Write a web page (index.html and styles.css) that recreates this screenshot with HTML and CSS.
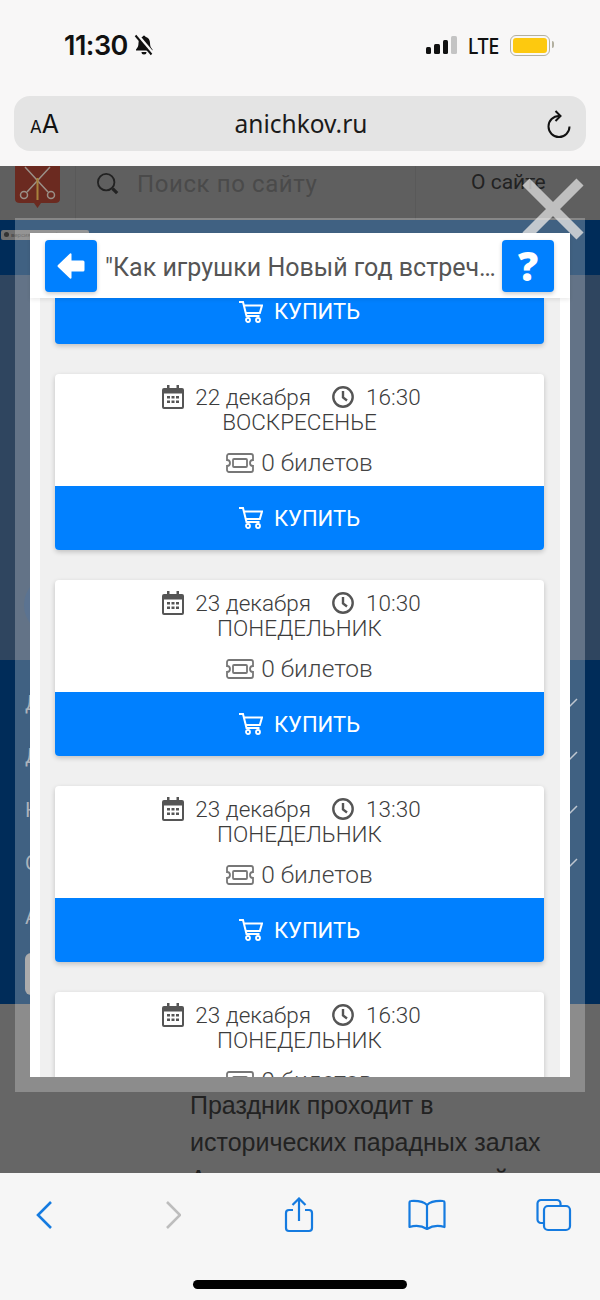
FILE: index.html
```html
<!DOCTYPE html>
<html lang="ru">
<head>
    <meta charset="UTF-8">
    <meta name="viewport" content="width=device-width, initial-scale=1.0">
    <title>anichkov.ru</title>
    <link rel="stylesheet" href="styles.css">
</head>
<body>
    <!-- Iconos repetidos -->
    <svg class="defs" width="0" height="0">
        <symbol id="i-cal" viewBox="0 0 22 24">
            <path fill="#555" d="M5 0h2.500v3h7V0H17v3h3a2 2 0 0 1 2 2v17a2 2 0 0 1-2 2H2a2 2 0 0 1-2-2V5a2 2 0 0 1 2-2h3zM2 8.500V21.500a.5.5 0 0 0 .5.5h17a.5.5 0 0 0 .5-.5V8.500z"/>
            <path fill="#555" d="M5 11h3v2.500H5zM9.500 11h3v2.500h-3zM14 11h3v2.500h-3zM5 15.500h3V18H5zM9.500 15.500h3V18h-3zM14 15.500h3V18h-3z"/>
        </symbol>
        <symbol id="i-clock" viewBox="0 0 22 22">
            <circle cx="11" cy="11" r="9.700" fill="none" stroke="#555" stroke-width="2.400"/>
            <path d="M11 5v6.500l4 3" fill="none" stroke="#555" stroke-width="2.400"/>
        </symbol>
        <symbol id="i-ticket" viewBox="0 0 28 20">
            <path fill="none" stroke="#777" stroke-width="1.800" d="M3 1h22a2 2 0 0 1 2 2v4a3 3 0 0 0 0 6v4a2 2 0 0 1-2 2H3a2 2 0 0 1-2-2v-4a3 3 0 0 0 0-6V3a2 2 0 0 1 2-2z"/>
            <rect x="7" y="6" width="14" height="8" rx="1" fill="none" stroke="#777" stroke-width="1.800"/>
        </symbol>
        <symbol id="i-cart" viewBox="0 0 24 22">
            <path fill="none" stroke="#fff" stroke-width="2" d="M0 1h4l3.500 14h13M5 4.500h18l-2.200 7.500H6.800"/>
            <circle cx="9" cy="19" r="2" fill="none" stroke="#fff" stroke-width="1.800"/>
            <circle cx="19" cy="19" r="2" fill="none" stroke="#fff" stroke-width="1.800"/>
        </symbol>
    </svg>

    <!-- Barra de estado y direccion -->
    <header class="browser-top">
        <div class="status-bar">
            <div class="status-left">
                <span class="time">11:30</span>
                <svg class="bell" width="20" height="22" viewBox="0 0 20 22">
                    <path fill="#111" d="M10 1.500a2 2 0 0 1 1.500 1.200c3 .8 4.500 3.300 4.500 6.300 0 3 .8 4.500 2.500 6.500v1H2v-1c1.700-2 2.500-3.500 2.500-6.500 0-3 1.500-5.500 4-6.300A2 2 0 0 1 10 1.500zM7.500 18h5a2.500 2.500 0 0 1-5 0z"/>
                    <path stroke="#f8f7f7" stroke-width="3" d="M3.500 1l16 19"/>
                    <path stroke="#111" stroke-width="2" d="M1.500 1.500l16 19"/>
                </svg>
            </div>
            <div class="status-right">
                <div class="signal">
                    <i class="bar bar-1"></i><i class="bar bar-2"></i><i class="bar bar-3"></i><i class="bar bar-4"></i>
                </div>
                <span class="lte">LTE</span>
                <div class="battery"><div class="battery-fill"></div></div>
            </div>
        </div>
        <div class="url-bar">
            <span class="text-size"><small>A</small>A</span>
            <span class="url">anichkov.ru</span>
            <svg class="reload" width="26" height="28" viewBox="0 0 26 28">
                <path fill="none" stroke="#111" stroke-width="2" d="M13 6a10.500 10.500 0 1 0 10.500 10.500"/>
                <path fill="none" stroke="#111" stroke-width="2" d="M9.500 1l5 5-5 5"/>
            </svg>
        </div>
    </header>

    <!-- Pagina de fondo, oscurecida -->
    <div class="site">
        <div class="site-head">
            <svg class="crest" width="45" height="43" viewBox="0 0 45 43">
                <path fill="#6b2a20" d="M0 0h45v33q0 4-5 4H26l-3.500 5-3.500-5H5q-5 0-5-4z"/>
                <path fill="none" stroke="#9a9088" stroke-width="1.500" d="M10 1l23 25M35 1L12 26"/>
                <path fill="none" stroke="#a8823c" stroke-width="2" d="M22.500 12v22"/>
                <circle cx="9" cy="29" r="3.500" fill="none" stroke="#9a9088" stroke-width="1.500"/>
                <circle cx="36" cy="29" r="3.500" fill="none" stroke="#9a9088" stroke-width="1.500"/>
            </svg>
            <div class="site-search">
                <svg width="22" height="22" viewBox="0 0 24 24">
                    <circle cx="10" cy="10" r="9" fill="none" stroke="#222" stroke-width="2"/>
                    <path stroke="#222" stroke-width="3.500" d="M17 17l5 5"/>
                </svg>
                <span class="search-text">Поиск по сайту</span>
            </div>
            <div class="site-about">О сайте</div>
        </div>
        <div class="site-band">
            <div class="vision-badge"><i class="vision-dot"></i>версия для слабовидящих</div>
        </div>
        <div class="site-hero">
            <div class="hero-pill"></div>
        </div>
        <nav class="site-nav">
            <div class="nav-row">Дворец<svg class="nav-check" width="16" height="10" viewBox="0 0 16 10"><path fill="none" stroke="#aab4c0" stroke-width="1.500" d="M1 1l7 7 7-7"/></svg></div>
            <div class="nav-row">Детям<svg class="nav-check" width="16" height="10" viewBox="0 0 16 10"><path fill="none" stroke="#aab4c0" stroke-width="1.500" d="M1 1l7 7 7-7"/></svg></div>
            <div class="nav-row">Кружки<svg class="nav-check" width="16" height="10" viewBox="0 0 16 10"><path fill="none" stroke="#aab4c0" stroke-width="1.500" d="M1 1l7 7 7-7"/></svg></div>
            <div class="nav-row">Обучение<svg class="nav-check" width="16" height="10" viewBox="0 0 16 10"><path fill="none" stroke="#aab4c0" stroke-width="1.500" d="M1 1l7 7 7-7"/></svg></div>
            <div class="nav-row">Афиша</div>
            <div class="nav-btn"></div>
        </nav>
        <div class="site-text">
            <p>Праздник проходит в<br>исторических парадных залах<br>Аничкова дворца и детской</p>
        </div>
    </div>

    <!-- Cruz de cierre, queda debajo del modal -->
    <svg class="modal-close" width="62" height="62" viewBox="0 0 62 62">
        <path stroke="#d4d4d4" stroke-opacity=".82" stroke-width="10" d="M4 4l54 54M58 4L4 58"/>
    </svg>

    <!-- Modal con las sesiones -->
    <div class="modal">
        <div class="modal-box">
            <div class="modal-head">
                <div class="icon-btn">
                    <svg width="28" height="26" viewBox="0 0 28 26"><path fill="#fff" d="M13 0.500q1-.5 1.500.5v6.500H26q1.500 0 1.500 1.500v8q0 1.500-1.500 1.500H14.500V25q-.5 1-1.500.5L1 14q-1-1 0-2z"/></svg>
                </div>
                <div class="modal-title">"Как игрушки Новый год встречали"</div>
                <div class="icon-btn help">?</div>
            </div>
            <div class="modal-list">
                <a class="buy-btn buy-cut">
                    <svg class="cart" width="24" height="22"><use href="#i-cart"/></svg>КУПИТЬ
                </a>

                <div class="card">
                    <div class="card-body">
                        <div class="card-date">
                            <svg width="22" height="24"><use href="#i-cal"/></svg><span class="date-text">22 декабря</span>
                            <svg width="22" height="22"><use href="#i-clock"/></svg><span class="hour-text">16:30</span>
                        </div>
                        <div class="card-day">ВОСКРЕСЕНЬЕ</div>
                        <div class="card-tickets"><svg width="28" height="20"><use href="#i-ticket"/></svg>0 билетов</div>
                    </div>
                    <a class="buy-btn"><svg class="cart" width="24" height="22"><use href="#i-cart"/></svg>КУПИТЬ</a>
                </div>

                <div class="card">
                    <div class="card-body">
                        <div class="card-date">
                            <svg width="22" height="24"><use href="#i-cal"/></svg><span class="date-text">23 декабря</span>
                            <svg width="22" height="22"><use href="#i-clock"/></svg><span class="hour-text">10:30</span>
                        </div>
                        <div class="card-day">ПОНЕДЕЛЬНИК</div>
                        <div class="card-tickets"><svg width="28" height="20"><use href="#i-ticket"/></svg>0 билетов</div>
                    </div>
                    <a class="buy-btn"><svg class="cart" width="24" height="22"><use href="#i-cart"/></svg>КУПИТЬ</a>
                </div>

                <div class="card">
                    <div class="card-body">
                        <div class="card-date">
                            <svg width="22" height="24"><use href="#i-cal"/></svg><span class="date-text">23 декабря</span>
                            <svg width="22" height="22"><use href="#i-clock"/></svg><span class="hour-text">13:30</span>
                        </div>
                        <div class="card-day">ПОНЕДЕЛЬНИК</div>
                        <div class="card-tickets"><svg width="28" height="20"><use href="#i-ticket"/></svg>0 билетов</div>
                    </div>
                    <a class="buy-btn"><svg class="cart" width="24" height="22"><use href="#i-cart"/></svg>КУПИТЬ</a>
                </div>

                <div class="card">
                    <div class="card-body">
                        <div class="card-date">
                            <svg width="22" height="24"><use href="#i-cal"/></svg><span class="date-text">23 декабря</span>
                            <svg width="22" height="22"><use href="#i-clock"/></svg><span class="hour-text">16:30</span>
                        </div>
                        <div class="card-day">ПОНЕДЕЛЬНИК</div>
                        <div class="card-tickets"><svg width="28" height="20"><use href="#i-ticket"/></svg>0 билетов</div>
                    </div>
                    <a class="buy-btn"><svg class="cart" width="24" height="22"><use href="#i-cart"/></svg>КУПИТЬ</a>
                </div>
            </div>
        </div>
    </div>

    <!-- Barra inferior del navegador -->
    <footer class="browser-bottom">
        <div class="tools">
            <svg width="18" height="30" viewBox="0 0 18 30"><path fill="none" stroke="#157be0" stroke-width="2.600" d="M16 2L3 15l13 13"/></svg>
            <svg width="18" height="30" viewBox="0 0 18 30"><path fill="none" stroke="#bdbdbd" stroke-width="2.600" d="M4 2l13 13L4 28"/></svg>
            <svg width="30" height="36" viewBox="0 0 30 36"><path fill="none" stroke="#157be0" stroke-width="2.200" d="M9 13H5a3 3 0 0 0-3 3v15a3 3 0 0 0 3 3h20a3 3 0 0 0 3-3V16a3 3 0 0 0-3-3h-4M15 24V2M8.500 8L15 1.500 21.500 8"/></svg>
            <svg width="38" height="32" viewBox="0 0 38 32"><path fill="none" stroke="#157be0" stroke-width="2.200" stroke-linejoin="round" d="M19 6C16 3 11 1.500 3 2 1.800 2 1.500 3 1.500 4v24c5-1.500 12-1.500 17.500 2 5.500-3.500 12.500-3.500 17.500-2V4c0-1-.3-2-1.500-2C27 1.500 22 3 19 6zM19 6v24"/></svg>
            <svg width="36" height="34" viewBox="0 0 36 34"><path fill="none" stroke="#157be0" stroke-width="2.200" d="M7 25H5a3.500 3.500 0 0 1-3.500-3.500v-16A3.500 3.500 0 0 1 5 2h16a3.500 3.500 0 0 1 3.500 3.500V8"/><rect x="8" y="8" width="26" height="24" rx="4" fill="none" stroke="#157be0" stroke-width="2.200"/></svg>
        </div>
        <div class="home-indicator"></div>
    </footer>
</body>
</html>
```

FILE: styles.css
```css
/* General */
* {
    box-sizing: border-box;
}

html, body {
    margin: 0;
    padding: 0;
}

body {
    position: relative;
    width: 600px;
    height: 1300px;
    overflow: hidden;
    background-color: #f7f7f7;
    font-family: Roboto, "Liberation Sans", sans-serif;
}

.defs {
    position: absolute;
}

/* Parte superior del navegador */
.browser-top {
    height: 166px;
    padding: 0 14px;
    background-color: #f8f7f7;
}

.status-bar {
    display: flex;
    justify-content: space-between;
    align-items: center;
    height: 96px;
    padding: 0 36px 6px 50px;
}

.status-left {
    display: flex;
    align-items: center;
    gap: 6px;
}

.time {
    font-family: Inter, sans-serif;
    font-size: 27px;
    font-weight: 600;
    letter-spacing: -0.5px;
    color: #111;
}

.status-right {
    display: flex;
    align-items: center;
}

.signal {
    display: flex;
    align-items: flex-end;
    gap: 3px;
    height: 18px;
}

.bar {
    display: block;
    width: 5.500px;
    border-radius: 1.500px;
    background-color: #111;
}

.bar-1 { height: 7px; }
.bar-2 { height: 10px; }
.bar-3 { height: 14px; }
.bar-4 { height: 18px; background-color: #c4c4c4; }

.lte {
    margin-left: 9px;
    font-family: "Noto Sans", sans-serif;
    font-size: 22px;
    font-weight: 500;
    letter-spacing: -0.5px;
    color: #111;
    transform: scaleX(0.9);
}

.battery {
    position: relative;
    width: 40px;
    height: 21px;
    margin-left: 10px;
    padding: 2px;
    border: 1.500px solid #b3b0a0;
    border-radius: 6px;
}

.battery::after {
    content: "";
    position: absolute;
    right: -5px;
    top: 5px;
    width: 2px;
    height: 7px;
    border-radius: 0 2px 2px 0;
    background-color: #b3b0a0;
}

.battery-fill {
    height: 100%;
    border-radius: 3px;
    background-color: #fdc90f;
}

.url-bar {
    display: flex;
    align-items: center;
    justify-content: space-between;
    height: 55px;
    padding: 0 14px 0 16px;
    border-radius: 16px;
    background-color: #e4e4e4;
}

.text-size {
    width: 50px;
    font-family: Inter, sans-serif;
    font-size: 25px;
    color: #111;
}

.text-size small {
    font-size: 17px;
}

.url {
    font-family: "Noto Sans", sans-serif;
    font-size: 24.500px;
    color: #1a1a1a;
}

.reload {
    margin-left: 24px;
}

/* Pagina de fondo */
.site {
    height: 1007px;
    overflow: hidden;
}

.site-head {
    display: flex;
    align-items: flex-start;
    height: 54px;
    background-color: #5f5f5f;
}

.crest {
    flex: none;
    margin-left: 15px;
}

.site-search {
    display: flex;
    align-items: center;
    gap: 18px;
    height: 54px;
    margin-left: 15px;
    padding: 0 21px 18px;
    width: 341px;
    border-left: 1px solid #595959;
    border-right: 1px solid #595959;
}

.search-text {
    font-size: 24px;
    letter-spacing: 0.6px;
    color: #4a4a4a;
}

.site-about {
    margin-left: 55px;
    padding-top: 4px;
    font-size: 21px;
    color: #222;
    white-space: nowrap;
}

.site-band {
    height: 55px;
    padding-top: 2px;
    background-color: #002c59;
}

.vision-badge {
    display: inline-flex;
    align-items: center;
    gap: 2px;
    width: 88px;
    height: 10px;
    margin-left: 1px;
    border-radius: 2px;
    background-color: #707070;
    font-size: 6px;
    white-space: nowrap;
    overflow: hidden;
    color: #444;
}

.vision-dot {
    flex: none;
    width: 5px;
    height: 5px;
    margin-left: 3px;
    border-radius: 50%;
    background-color: #333;
}

.site-hero {
    height: 385px;
    padding: 300px 0 0 24px;
    background-color: #2f455f;
}

.hero-pill {
    width: 70px;
    height: 60px;
    border-radius: 30px;
    background-color: #24446d;
}

.site-nav {
    height: 344px;
    padding: 16px 22px 0 25px;
    background-color: #002c59;
    font-size: 20px;
    color: #8f9aa6;
}

.nav-row {
    display: flex;
    justify-content: space-between;
    align-items: center;
    height: 53.500px;
}

.nav-btn {
    width: 200px;
    height: 42px;
    margin-top: 9px;
    border-radius: 6px;
    background-color: #8f8f8f;
}

.site-text {
    height: 169px;
    padding: 83px 0 0 190px;
    background-color: #666;
}

.site-text p {
    margin: 0;
    font-family: "Liberation Sans", sans-serif;
    font-size: 25px;
    line-height: 37px;
    white-space: nowrap;
    color: #222;
}

/* Cruz de cierre */
.modal-close {
    position: absolute;
    left: 522px;
    top: 178px;
}

/* Modal */
.modal {
    position: absolute;
    left: 15px;
    top: 218px;
    width: 570px;
    height: 874px;
    padding: 15px;
    background-color: rgba(255, 255, 255, 0.25);
}

.modal-box {
    display: flex;
    flex-direction: column;
    height: 100%;
    background-color: white;
}

.modal-head {
    position: relative;
    display: flex;
    align-items: center;
    flex: none;
    height: 65px;
    padding: 0 16px 0 15px;
    background-color: white;
    box-shadow: 0px 2px 4px rgba(0, 0, 0, 0.08);
}

.icon-btn {
    display: flex;
    justify-content: center;
    align-items: center;
    flex: none;
    width: 52px;
    height: 52px;
    border-radius: 4px;
    background-color: #0080ff;
    box-shadow: 0px 2px 4px rgba(0, 0, 0, 0.2);
}

.help {
    font-family: "Open Sans", sans-serif;
    font-size: 40px;
    font-weight: 800;
    color: white;
}

.modal-title {
    flex: 1;
    min-width: 0;
    padding: 3px 5px 0 8px;
    font-size: 25px;
    color: #555;
    white-space: nowrap;
    overflow: hidden;
    text-overflow: ellipsis;
}

.modal-list {
    flex: 1;
    min-height: 0;
    overflow: hidden;
    margin: 0 10px;
    padding: 0 16px 0 15px;
    background-color: #f0f0f0;
}

/* Cards de sesiones */
.card {
    height: 176px;
    margin-top: 30px;
    border-radius: 4px;
    overflow: hidden;
    background-color: white;
    box-shadow: 0px 2px 5px rgba(0, 0, 0, 0.2);
}

.card-body {
    height: 112px;
    padding-top: 9px;
    text-align: center;
    font-size: 22.500px;
    font-weight: 300;
    color: #3c3c3c;
}

.card-date {
    display: flex;
    justify-content: center;
    align-items: center;
    height: 28px;
    padding-right: 16px;
    white-space: nowrap;
}

.date-text {
    margin: 0 21px 0 11px;
}

.hour-text {
    margin-left: 12px;
}

.card-day {
    height: 24px;
    line-height: 22px;
}

.card-tickets {
    display: flex;
    justify-content: center;
    align-items: center;
    gap: 7px;
    margin-top: 13px;
    font-size: 24.500px;
    color: #444;
}

.buy-btn {
    display: flex;
    justify-content: center;
    align-items: center;
    gap: 11px;
    height: 64px;
    background-color: #0080ff;
    font-size: 22px;
    color: white;
}

.buy-cut {
    height: 46px;
    padding-bottom: 19px;
    padding-top: 0;
    border-radius: 0 0 4px 4px;
    box-shadow: 0px 2px 5px rgba(0, 0, 0, 0.2);
}

/* Parte inferior del navegador */
.browser-bottom {
    height: 127px;
    background-color: #f6f6f6;
}

.tools {
    display: grid;
    grid-template-columns: repeat(5, 40px);
    justify-content: space-between;
    justify-items: center;
    align-items: center;
    height: 84px;
    padding: 0 26px 0 24px;
}

.home-indicator {
    width: 214px;
    height: 9px;
    margin: 23px auto 0;
    border-radius: 5px;
    background-color: black;
}
```
